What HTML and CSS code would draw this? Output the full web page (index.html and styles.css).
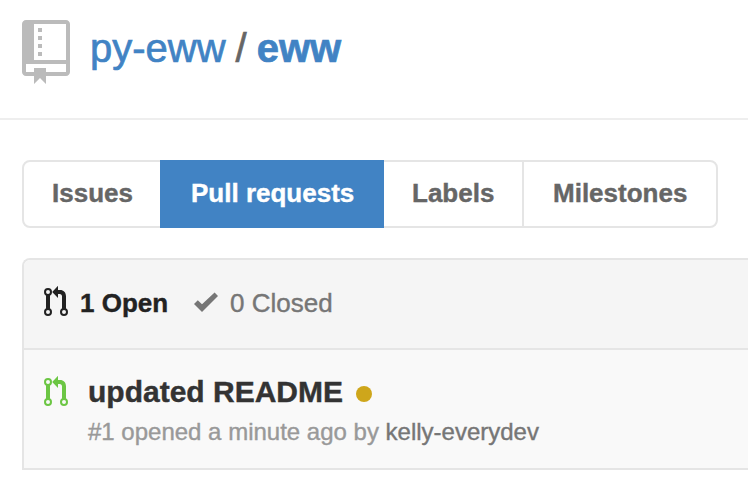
FILE: index.html
```html
<!DOCTYPE html>
<html lang="en">
<head>
<meta charset="utf-8">
<title>py-eww/eww</title>
<link rel="stylesheet" href="styles.css">
</head>
<body>
<svg class="defs" width="0" height="0">
  <symbol id="pull-request" viewBox="0 0 12 16">
    <g fill="none" stroke="currentColor" stroke-width="1"><circle cx="2" cy="3" r="1.5"/><circle cx="2" cy="13" r="1.5"/><circle cx="10" cy="13" r="1.5"/></g>
    <path fill="currentColor" d="M1 4.5h2v7H1zM11 11.5V5.2C11 3.2 9.8 2 8 2H7V-.1L4.1 3 7 6V4h.8C8.6 4 9 4.5 9 5.3v6.2z"/>
  </symbol>
</svg>
<header class="repo-header">
  <svg class="repo-icon" viewBox="0 0 12 16"><path fill-rule="evenodd" d="M5 9H4V8h1zM5 6H4v1h1zM5 4H4v1h1zM5 2H4v1h1zM12 1v12c0 .55-.45 1-1 1H6v2l-1.5-1.5L3 16v-2H1c-.55 0-1-.45-1-1V1c0-.55.45-1 1-1h10c.55 0 1 .45 1 1zM11 11H1v2h2v-1h3v1h5zM11 1H3v9h8z"/></svg>
  <h1 class="repo-title"><a class="owner">py-eww</a><span class="slash">/</span><a class="name">eww</a></h1>
</header>
<main>
  <nav class="tabs">
    <a class="tab">Issues</a><a class="tab selected">Pull requests</a><a class="tab">Labels</a><a class="tab divided">Milestones</a>
  </nav>
  <section class="listing">
    <div class="states">
      <svg class="icon"><use href="#pull-request"/></svg>
      <a class="open">1 Open</a>
      <svg class="icon check" viewBox="0 0 12 16"><path d="M12 5l-8 8-4-4 1.9-1.9L4 9.1l6.3-5.9z"/></svg>
      <a class="closed">0 Closed</a>
    </div>
    <article class="item">
      <svg class="icon green"><use href="#pull-request"/></svg>
      <div class="body">
        <h2 class="title"><span class="title-text">updated README</span><i class="status"></i></h2>
        <p class="meta">#1 opened a minute ago by <a class="author">kelly-everydev</a></p>
      </div>
    </article>
  </section>
</main>
</body>
</html>
```
FILE: styles.css
```css
* { box-sizing: border-box; }
body { margin: 0; background: #fff; color: #333; font-family: "Liberation Sans", Helvetica, Arial, sans-serif; -webkit-text-stroke: .4px currentColor; overflow: hidden; }
h1, h2, p { margin: 0; }
a, span { -webkit-text-stroke-color: currentColor; }
svg { display: block; flex: none; }
.defs { position: absolute; }
.repo-header { display: flex; height: 120px; padding: 20px 0 0 22px; border-bottom: 2px solid #eee; }
.repo-icon { width: 48px; height: 64px; fill: #bbb; }
.repo-title { display: flex; margin-left: 20px; height: 56px; font-size: 40px; line-height: 56px; font-weight: 400; color: #4183c4; -webkit-text-stroke-width: .7px; }
.slash { margin: 0 10px; color: #666; }
.name { font-weight: 700; }
.tabs { display: grid; grid-template-columns: 136px 224px 138px 194px; width: 696px; height: 68px; margin: 40px 0 30px 22px; border: 2px solid #e5e5e5; border-radius: 8px; }
.tab { padding-left: 28px; font-size: 26px; line-height: 62px; font-weight: 700; color: #666; white-space: nowrap; }
.selected { margin: -2px 0; padding: 2px 0 0 31px; background: #4183c4; color: #fff; }
.divided { padding-left: 29px; border-left: 2px solid #e5e5e5; }
.listing { margin-left: 22px; border: 2px solid #e5e5e5; border-right: 0; border-radius: 8px 0 0 0; overflow: hidden; }
.states { display: flex; height: 90px; padding: 26px 0 0 20px; background: #f5f5f5; border-bottom: 2px solid #e5e5e5; font-size: 26px; line-height: 34px; color: #767676; }
.icon { width: 24px; height: 32px; color: #222; overflow: visible; }
.open { width: 126px; padding-left: 12px; color: #222; font-weight: 700; }
.check { fill: #767676; }
.closed { margin-left: 12px; }
.item { display: flex; height: 118px; padding: 26px 0 0 20px; background: #f9f9f9; }
.green { color: #6cc644; }
.body { margin-left: 20px; }
.title { display: flex; align-items: center; height: 32px; font-size: 30px; line-height: 32px; }
.status { width: 16px; height: 16px; margin: 4px 0 0 13px; border-radius: 50%; background: #cea61b; }
.meta { margin-top: 9px; font-size: 24px; line-height: 30px; color: #999; }
.author { color: #767676; }
```
